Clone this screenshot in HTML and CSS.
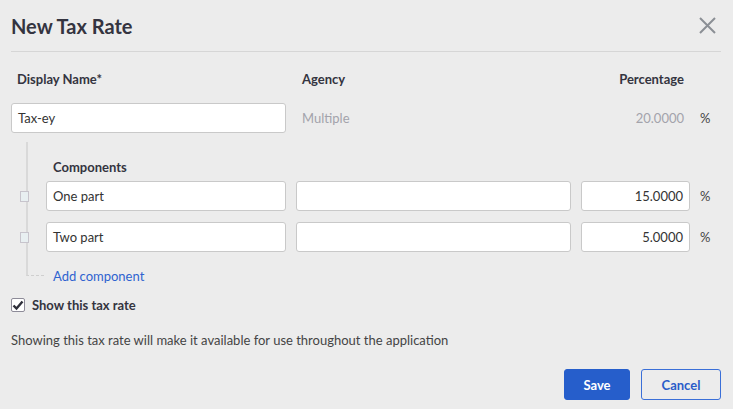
FILE: index.html
```html
<!DOCTYPE html>
<html lang="en">
<head>
<meta charset="utf-8">
<title>New Tax Rate</title>
<link rel="stylesheet" href="styles.css">
</head>
<body>
<div class="dialog">
  <header class="header">
    <h1 class="title">New Tax Rate</h1>
    <button class="close" aria-label="Close">
      <svg width="17" height="17" viewBox="0 0 17 17"><path d="M1 1 L16 16 M16 1 L1 16" stroke="#8b8f95" stroke-width="2" fill="none"/></svg>
    </button>
  </header>

  <div class="row labels">
    <div class="col-name lbl">Display Name*</div>
    <div class="col-agency lbl">Agency</div>
    <div class="col-pct lbl right">Percentage</div>
    <div class="col-unit"></div>
  </div>

  <div class="row main-row">
    <div class="col-name"><div class="input">Tax-ey</div></div>
    <div class="col-agency muted">Multiple</div>
    <div class="col-pct muted right">20.0000</div>
    <div class="col-unit">%</div>
  </div>

  <div class="tree">
    <div class="tree-body">
      <div class="comp-label">Components</div>
      <div class="comp-row">
        <span class="handle"></span>
        <div class="input comp-name">One part</div>
        <div class="input comp-agency"></div>
        <div class="input comp-pct">15.0000</div>
        <div class="col-unit">%</div>
      </div>
      <div class="comp-row">
        <span class="handle"></span>
        <div class="input comp-name">Two part</div>
        <div class="input comp-agency"></div>
        <div class="input comp-pct">5.0000</div>
        <div class="col-unit">%</div>
      </div>
    </div>
    <div class="add-row"><a class="add-link" href="#">Add component</a></div>
  </div>

  <label class="check-row">
    <span class="checkbox">
      <svg width="12" height="12" viewBox="0 0 12 12"><path d="M1.5 6.5 L4.5 9.5 L10.5 2.5" stroke="#2f2f3a" stroke-width="2.4" fill="none"/></svg>
    </span>
    <span class="check-text">Show this tax rate</span>
  </label>

  <p class="help">Showing this tax rate will make it available for use throughout the application</p>

  <footer class="footer">
    <button class="btn btn-primary">Save</button>
    <button class="btn btn-secondary">Cancel</button>
  </footer>
</div>
</body>
</html>
```

FILE: styles.css
```css
* { box-sizing: border-box; }

html, body {
  margin: 0;
  padding: 0;
  background: #ececec;
}

body {
  font-family: Lato, "Open Sans", "Liberation Sans", sans-serif;
  font-size: 13px;
  line-height: 16px;
  color: #333;
}

.dialog {
  width: 733px;
  height: 409px;
  padding: 0 12px 0 11px;
}

.header {
  height: 52px;
  border-bottom: 1px solid #d6d6d6;
  display: flex;
  align-items: center;
  justify-content: space-between;
}

.title {
  margin: 0;
  font-size: 20px;
  line-height: 24px;
  font-weight: 700;
  color: #343440;
}

.close {
  border: 0;
  background: none;
  padding: 0;
  margin-right: 5px;
  margin-top: 0;
  width: 17px;
  height: 17px;
  display: flex;
}

.row {
  display: flex;
  align-items: center;
}

.labels { margin-top: 19px; }

.main-row { margin-top: 16px; }

.col-name { width: 275px; }
.col-agency { width: 275px; margin-left: 10px; padding-left: 6px; }
.col-pct { width: 109px; margin-left: 10px; padding-right: 6px; }
.col-unit { padding-left: 10px; color: #444; }

.labels .col-name { padding-left: 6px; }

.lbl {
  font-weight: 700;
  color: #343440;
}

.right { text-align: right; }

.muted { color: #a3a3ab; }

.input {
  height: 30px;
  background: #fff;
  border: 1px solid #c9c9c9;
  border-radius: 3px;
  padding: 0 6px;
  display: flex;
  align-items: center;
  color: #333;
}

.tree {
  margin-top: 9px;
  margin-left: 15px;
}

.tree-body {
  border-left: 2px solid #d9d9d9;
  padding-top: 17px;
  padding-bottom: 16px;
}

.comp-label {
  font-weight: 700;
  color: #343440;
  padding-left: 25px;
  margin-bottom: 6px;
}

.comp-row {
  display: flex;
  align-items: center;
}

.comp-row + .comp-row { margin-top: 11px; }

.handle {
  width: 9px;
  height: 11px;
  margin-left: -8px;
  margin-right: 17px;
  background: #e8eff1;
  border: 1px solid #c7c4cc;
}

.comp-name { width: 240px; }
.comp-agency { width: 275px; margin-left: 10px; }
.comp-pct { width: 109px; margin-left: 10px; justify-content: flex-end; }

.add-row {
  display: flex;
  height: 16px;
}

.add-row::before {
  content: "";
  width: 16px;
  height: 7px;
  border-left: 2px solid #d9d9d9;
  border-bottom: 1px dashed #cfcfcf;
}

.add-link {
  margin-left: 9px;
  color: #2f63d0;
  text-decoration: none;
}

.check-row {
  margin-top: 13px;
  display: flex;
  align-items: center;
  height: 16px;
}

.checkbox {
  width: 14px;
  height: 14px;
  border: 1px solid #8d8b98;
  border-radius: 2px;
  background: #fff;
  display: flex;
  align-items: center;
  justify-content: center;
}

.check-text {
  margin-left: 7px;
  font-weight: 700;
  color: #343440;
}

.help {
  margin: 19px 0 0;
  color: #444;
}

.footer {
  margin-top: 21px;
  display: flex;
  justify-content: flex-end;
  gap: 11px;
}

.btn {
  height: 31px;
  border-radius: 3px;
  font-family: inherit;
  font-size: 13px;
  font-weight: 700;
  padding: 0 18px;
}

.btn-primary {
  width: 66px;
  background: #265ecb;
  border: 1px solid #265ecb;
  color: #fff;
}

.btn-secondary {
  width: 80px;
  background: transparent;
  border: 1px solid #3a6fd8;
  color: #2a5cc9;
}
```
